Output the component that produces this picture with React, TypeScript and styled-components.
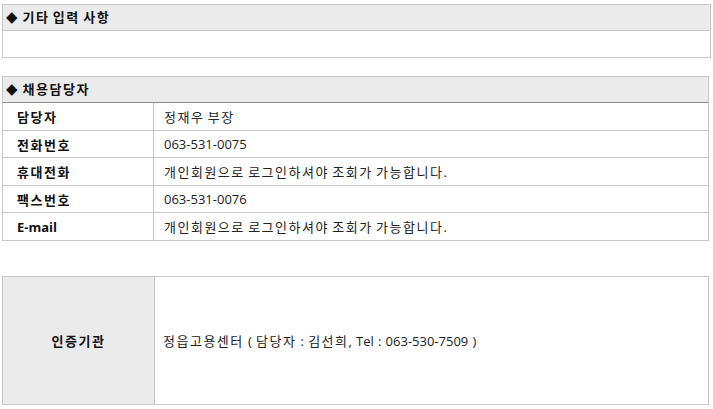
import { Fragment, type ReactNode } from 'react';
import styled, { createGlobalStyle } from 'styled-components';

const GlobalStyle = createGlobalStyle`
  body {
    margin: 0;
    background: #fff;
    font-family: "Open Sans", "Noto Sans CJK KR", sans-serif;
    font-size: 13px;
    color: #222;
  }
`;

const Page = styled.div`
  padding: 4px 0 0 2px;
  display: flex;
  flex-direction: column;
`;

const Box = styled.section<{ $width: number; $gap?: number }>`
  width: ${(p) => p.$width}px;
  box-sizing: border-box;
  border: 1px solid #c6c6c6;
  margin-bottom: ${(p) => p.$gap ?? 0}px;
`;

const BoxTitle = styled.h3<{ $strong?: boolean }>`
  margin: 0;
  height: 26px;
  box-sizing: border-box;
  padding-left: 3px;
  display: flex;
  align-items: center;
  gap: 5px;
  background: #ebebeb;
  border-bottom: 1px solid ${(p) => (p.$strong ? '#8a8a8a' : '#c6c6c6')};
  font-size: 13px;
  font-weight: bold;
  color: #111;
  line-height: 1;
`;

const Diamond = styled.span`
  font-family: "DejaVu Sans", sans-serif;
  font-size: 15px;
  font-weight: normal;
`;

// hangul in the source is a touch wider than Noto CJK
const Ko = styled.span`
  letter-spacing: 1.5px;
`;

const EmptyBody = styled.div`
  height: 26px;
`;

const InfoGrid = styled.div`
  display: grid;
  grid-template-columns: 151px 1fr;
`;

const Label = styled.div<{ $h: number; $last?: boolean }>`
  height: ${(p) => p.$h}px;
  box-sizing: border-box;
  display: flex;
  align-items: center;
  padding-left: 14px;
  border-right: 1px solid #c6c6c6;
  border-bottom: ${(p) => (p.$last ? 'none' : '1px solid #c6c6c6')};
  font-weight: bold;
  color: #111;
`;

const Value = styled.div<{ $h: number; $last?: boolean }>`
  height: ${(p) => p.$h}px;
  box-sizing: border-box;
  display: flex;
  align-items: center;
  padding-left: 10px;
  border-bottom: ${(p) => (p.$last ? 'none' : '1px solid #c6c6c6')};
  color: #222;
  white-space: pre;
`;

const CertRow = styled.div`
  display: grid;
  grid-template-columns: 152px 1fr;
  height: 127px;
`;

const CertLabel = styled.div`
  background: #ebebeb;
  border-right: 1px solid #c6c6c6;
  display: flex;
  align-items: center;
  justify-content: center;
  font-weight: bold;
  color: #111;
`;

const CertValue = styled.div`
  display: flex;
  align-items: center;
  padding-left: 8px;
  color: #222;
  white-space: pre;
  word-spacing: 0.8px;
`;

const ko = (text: string): ReactNode =>
  text.split(/([가-힣]+)/).map((part, i) =>
    /[가-힣]/.test(part) ? <Ko key={i}>{part}</Ko> : part
  );

const contacts = [
  { label: '담당자', value: '정재우 부장', h: 28 },
  { label: '전화번호', value: '063-531-0075', h: 27 },
  { label: '휴대전화', value: '개인회원으로 로그인하셔야 조회가 가능합니다.', h: 28 },
  { label: '팩스번호', value: '063-531-0076', h: 27 },
  { label: 'E-mail', value: '개인회원으로 로그인하셔야 조회가 가능합니다.', h: 27 },
];

export default function App() {
  return (
    <>
      <GlobalStyle />
      <Page>
        <Box $width={709} $gap={18}>
          <BoxTitle>
            <Diamond>◆</Diamond>
            <span>{ko('기타 입력 사항')}</span>
          </BoxTitle>
          <EmptyBody />
        </Box>

        <Box $width={707} $gap={35}>
          <BoxTitle $strong>
            <Diamond>◆</Diamond>
            <span>{ko('채용담당자')}</span>
          </BoxTitle>
          <InfoGrid>
            {contacts.map((c, i) => {
              const last = i === contacts.length - 1;
              return (
                <Fragment key={c.label}>
                  <Label $h={c.h} $last={last}>{ko(c.label)}</Label>
                  <Value $h={c.h} $last={last}><span>{ko(c.value)}</span></Value>
                </Fragment>
              );
            })}
          </InfoGrid>
        </Box>

        <Box $width={707}>
          <CertRow>
            <CertLabel>{ko('인증기관')}</CertLabel>
            <CertValue>
              <span>{ko('정읍고용센터 ( 담당자 : 김선희, Tel : 063-530-7509 )')}</span>
            </CertValue>
          </CertRow>
        </Box>
      </Page>
    </>
  );
}
